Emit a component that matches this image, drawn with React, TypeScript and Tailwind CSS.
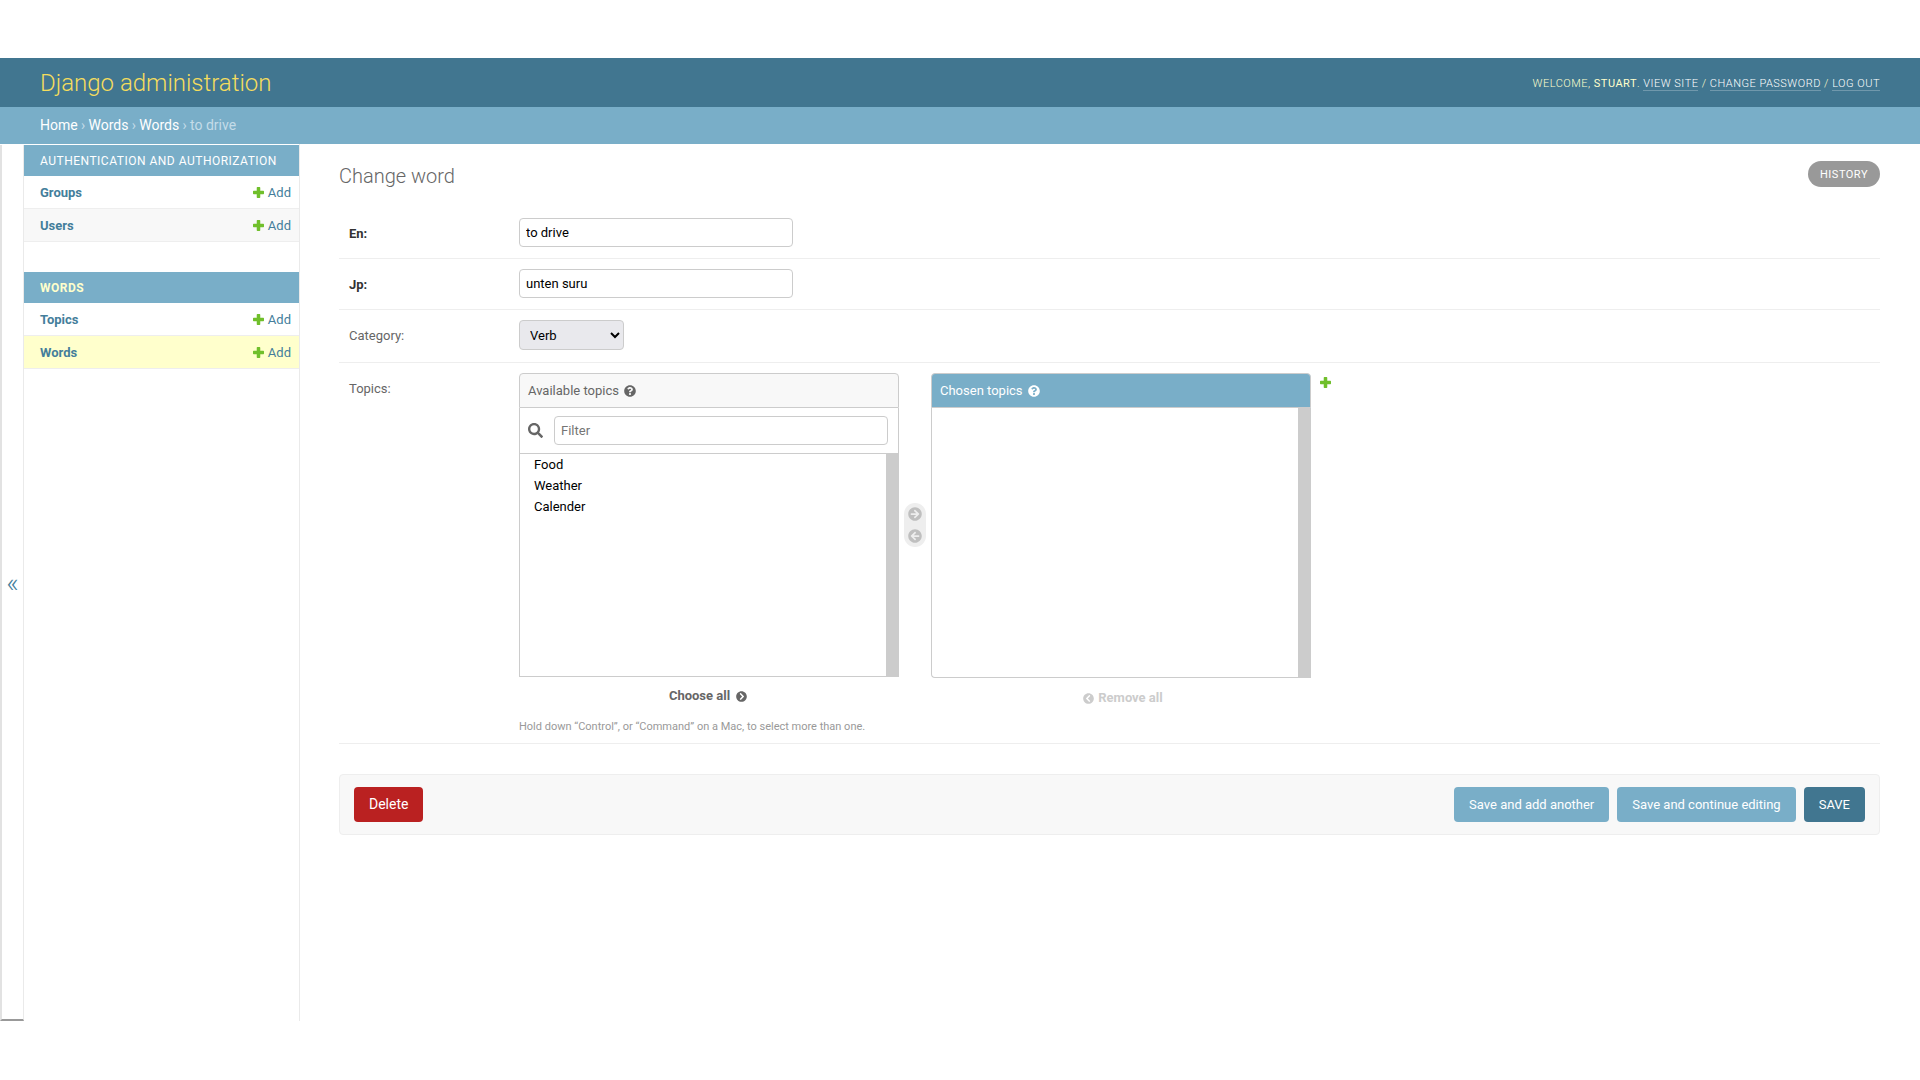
import React from "react";
import { FaQuestionCircle, FaSearch, FaArrowCircleRight, FaArrowCircleLeft, FaChevronCircleRight, FaChevronCircleLeft } from "react-icons/fa";

function Plus({ className }: { className?: string }) {
  return (
    <svg viewBox="0 0 10 10" className={className} fill="#70bf2b">
      <path d="M3.4 0.6Q3.4 0 4 0H6Q6.6 0 6.6 0.6V3.4H9.4Q10 3.4 10 4V6Q10 6.6 9.4 6.6H6.6V9.4Q6.6 10 6 10H4Q3.4 10 3.4 9.4V6.6H0.6Q0 6.6 0 6V4Q0 3.4 0.6 3.4H3.4Z" />
    </svg>
  );
}

function SideRow({ name, alt, current }: { name: string; alt?: boolean; current?: boolean }) {
  return (
    <div className={`h-[33px] flex items-center justify-between pl-4 pr-[8px] pt-px border-b border-[#eeeeee] text-[13px] ${current ? "bg-[#ffffcc]" : alt ? "bg-[#f8f8f8]" : "bg-white"}`}>
      <a className="font-bold text-[#447e9b]">{name}</a>
      <a className="flex items-center gap-[4px] text-[#447e9b]">
        <Plus className="w-[11px] h-[11px] -mt-px" />
        Add
      </a>
    </div>
  );
}

function Caption({ children, current }: { children: React.ReactNode; current?: boolean }) {
  return (
    <div className={`h-[31px] flex items-center pl-4 bg-[#79aec8] text-[12px] tracking-[0.5px] uppercase ${current ? "font-bold text-[#ffffcc]" : "font-normal text-white"}`}>
      {children}
    </div>
  );
}

function Sep() {
  return <span className="mx-[3.3px]">›</span>;
}

function Btn({ children, dark }: { children: React.ReactNode; dark?: boolean }) {
  return (
    <button className={`h-[35px] px-[15px] rounded-[4px] text-[13px] text-white ${dark ? "bg-[#417690]" : "bg-[#79aec8]"}`}>
      {children}
    </button>
  );
}

export default function App() {
  return (
    <div className="h-[1080px] pt-[58px] pb-[59px] flex flex-col bg-white font-[Roboto,sans-serif] text-[#333333] overflow-hidden">
      <header className="h-[49px] shrink-0 bg-[#417690] px-10 flex items-center justify-between">
        <h1 className="text-[24px] font-light text-[#f5dd5d]">Django administration</h1>
        <div className="pt-[4px] text-[11px] tracking-[0.5px] uppercase font-light text-[#ffffcc]">
          Welcome, <strong className="font-normal">Stuart</strong>.{" "}
          <a className="text-white border-b border-white/25">View site</a> /{" "}
          <a className="text-white border-b border-white/25">Change password</a> /{" "}
          <a className="text-white border-b border-white/25">Log out</a>
        </div>
      </header>
      <nav className="h-[37px] shrink-0 bg-[#79aec8] px-10 flex items-center text-[14px] text-[#c4dce8]">
        <a className="text-white">Home</a>
        <Sep />
        <a className="text-white">Words</a>
        <Sep />
        <a className="text-white">Words</a>
        <Sep />
        to drive
      </nav>
      <div className="flex-1 flex min-h-0">
        <button className="w-[24px] shrink-0 mt-px pt-[2px] flex items-center justify-center bg-white border-l-2 border-r border-b-2 border-l-[#e2e2e2] border-r-[#eaeaea] border-b-[#999999] text-[27px] font-light text-[#447e9b]">
          «
        </button>
        <aside className="w-[276px] shrink-0 pt-px border-r border-[#eaeaea]">
          <Caption>Authentication and Authorization</Caption>
          <SideRow name="Groups" />
          <SideRow name="Users" alt />
          <div className="h-[30px]" />
          <Caption current>Words</Caption>
          <SideRow name="Topics" />
          <SideRow name="Words" current />
        </aside>
        <main className="flex-1 min-w-0 pt-5 pl-[39px] pr-10">
          <div className="flex items-start justify-between h-[44px]">
            <h2 className="text-[20px] font-light text-[#666666] leading-[24px]">Change word</h2>
            <a className="mt-[-3px] h-[26px] px-3 pt-[2px] flex items-center rounded-[15px] bg-[#999999] text-white text-[11px] tracking-[0.5px] uppercase">History</a>
          </div>

          <div className="h-[51px] pt-[10px] pl-[10px] flex border-b border-[#eeeeee] text-[13px]">
            <label className="w-[170px] pt-[8px] leading-[16px] font-bold text-[#333333]">En:</label>
            <input readOnly value="to drive" className="w-[274px] h-[29px] px-[6px] border border-[#cccccc] rounded-[4px] text-[13px] text-black" />
          </div>
          <div className="h-[51px] pt-[10px] pl-[10px] flex border-b border-[#eeeeee] text-[13px]">
            <label className="w-[170px] pt-[8px] leading-[16px] font-bold text-[#333333]">Jp:</label>
            <input readOnly value="unten suru" className="w-[274px] h-[29px] px-[6px] border border-[#cccccc] rounded-[4px] text-[13px] text-black" />
          </div>
          <div className="h-[53px] pt-[10px] pl-[10px] flex border-b border-[#eeeeee] text-[13px]">
            <label className="w-[170px] pt-[8px] leading-[16px] text-[#666666]">Category:</label>
            <select defaultValue="Verb" className="w-[105px] h-[30px] pl-[6px] border border-[#cccccc] rounded-[4px] bg-[#e9e9ed] text-[13px] text-black">
              <option>Verb</option>
            </select>
          </div>

          <div className="h-[381px] pt-[10px] pl-[10px] flex border-b border-[#eeeeee] text-[13px]">
            <label className="w-[170px] pt-[8px] leading-[16px] text-[#666666]">Topics:</label>
            <div className="flex-1">
              <div className="flex items-start h-[347px]">
                <div className="w-[380px]">
                  <div className="h-[35px] flex items-center gap-[5px] pl-2 bg-[#f8f8f8] border border-[#cccccc] rounded-t-[4px] text-[#666666]">
                    Available topics
                    <FaQuestionCircle className="w-[12px] h-[12px]" />
                  </div>
                  <div className="h-[46px] flex items-center pl-2 pr-[10px] border-x border-b border-[#cccccc]">
                    <FaSearch className="w-[15px] h-[15px] text-[#666666]" />
                    <input placeholder="Filter" className="ml-[11px] flex-1 min-w-0 h-[29px] px-[6px] border border-[#cccccc] rounded-[4px] text-[13px] placeholder:text-[#757575]" />
                  </div>
                  <div className="h-[223px] flex">
                    <div className="flex-1 border-l border-b border-[#cccccc] pl-[14px] text-black leading-[21px]">
                      <div>Food</div>
                      <div>Weather</div>
                      <div>Calender</div>
                    </div>
                    <div className="w-[13px] bg-[#cccccc]" />
                  </div>
                  <div className="mt-[9px] flex items-center justify-center gap-[6px] font-bold text-[13px] text-[#666666] leading-[20px] pr-[2px]">
                    Choose all
                    <FaChevronCircleRight className="w-[11px] h-[11px] mt-[1px]" />
                  </div>
                </div>
                <div className="w-[22px] h-[44px] mt-[130px] ml-[5px] flex flex-col items-center justify-center gap-[8px] rounded-[15px] bg-[#eeeeee] text-[#bfbfbf]">
                  <FaArrowCircleRight className="w-[14px] h-[14px]" />
                  <FaArrowCircleLeft className="w-[14px] h-[14px]" />
                </div>
                <div className="w-[380px] ml-[5px]">
                  <div className="h-[35px] flex items-center gap-[5px] pl-2 bg-[#79aec8] border border-[#cccccc] rounded-t-[4px] text-white">
                    Chosen topics
                    <FaQuestionCircle className="w-[12px] h-[12px]" />
                  </div>
                  <div className="h-[270px] flex">
                    <div className="flex-1 border-l border-b border-[#cccccc] rounded-bl-[4px]" />
                    <div className="w-[13px] bg-[#cccccc]" />
                  </div>
                  <div className="mt-[10px] flex items-center justify-center gap-[4px] font-bold text-[13px] text-[#cccccc] leading-[20px] pl-[4px]">
                    <FaChevronCircleLeft className="w-[11px] h-[11px]" />
                    Remove all
                  </div>
                </div>
                <Plus className="w-[11px] h-[11px] ml-[9px] mt-[4px]" />
              </div>
              <div className="text-[11px] leading-[14px] text-[#999999]">Hold down “Control”, or “Command” on a Mac, to select more than one.</div>
            </div>
          </div>

          <div className="mt-[30px] h-[61px] px-[14px] flex items-center justify-between gap-2 bg-[#f8f8f8] border border-[#eeeeee] rounded-[4px]">
            <button className="h-[35px] px-[15px] pb-px rounded-[4px] bg-[#ba2121] text-white text-[14px]">Delete</button>
            <div className="flex gap-2">
              <Btn>Save and add another</Btn>
              <Btn>Save and continue editing</Btn>
              <Btn dark>SAVE</Btn>
            </div>
          </div>
        </main>
      </div>
    </div>
  );
}
